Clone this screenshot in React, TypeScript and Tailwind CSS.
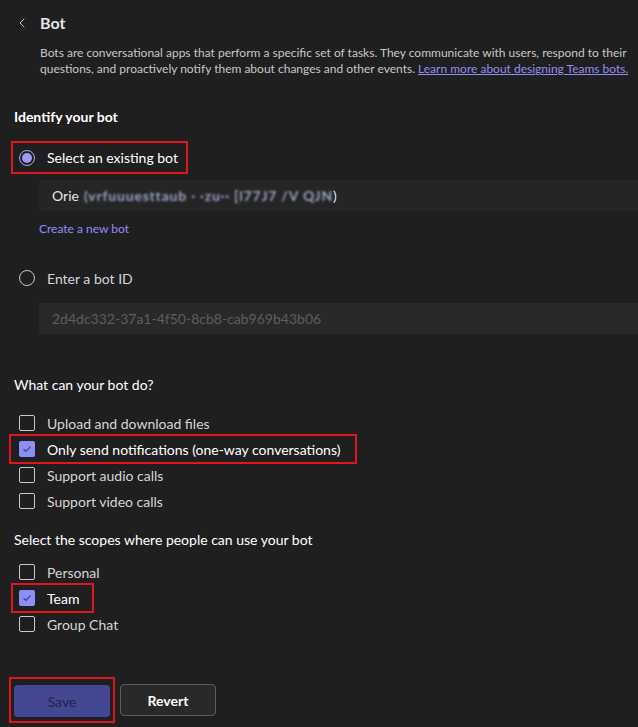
import { ChevronLeft } from 'lucide-react'

function Radio({ checked }: { checked?: boolean }) {
    return checked ? (
        <span className="w-[16px] h-[16px] rounded-full border border-[#a8a9f5] flex items-center justify-center shrink-0">
            <span className="w-[10px] h-[10px] rounded-full bg-[#9a9bf2]" />
        </span>
    ) : (
        <span className="w-[16px] h-[16px] rounded-full border border-[#c8c8c8] shrink-0" />
    )
}

function Check({ checked }: { checked?: boolean }) {
    return checked ? (
        <span className="w-[16px] h-[16px] rounded-[2px] bg-[#8e8ff5] flex items-center justify-center shrink-0">
            <svg width="10" height="8" viewBox="0 0 10 8" fill="none">
                <path d="M1.5 4.2L3.8 6.3L8.5 1.6" stroke="#3d3e80" strokeWidth="1.2" />
            </svg>
        </span>
    ) : (
        <span className="w-[16px] h-[16px] rounded-[2px] border border-[#c8c8c8] shrink-0" />
    )
}

function CheckRow({ label, checked }: { label: string; checked?: boolean }) {
    return (
        <div className="flex items-center h-[26px] gap-[12px] pl-[19px] whitespace-nowrap">
            <Check checked={checked} />
            <span className={`text-[14px] ${checked ? 'text-white' : 'text-[#d6d6d6]'}`}>{label}</span>
        </div>
    )
}

export default function App() {
    return (
        <div className="w-[638px] h-[727px] overflow-hidden bg-[#1f1f1f] text-[#d6d6d6] font-['Lato',sans-serif]">
            {/* Header */}
            <div className="flex items-center pt-[12px] pl-[14px] h-[34px]">
                <ChevronLeft className="w-[16px] h-[16px] text-[#c8c8c8]" strokeWidth={1.5} />
                <h1 className="ml-[10px] text-[16px] font-bold text-[#e6e6e6] leading-[22px]">Bot</h1>
            </div>
            <p className="pl-[40px] mt-[11px] text-[12px] leading-[16px] text-[#c8c8c8] whitespace-nowrap">
                Bots are conversational apps that perform a specific set of tasks. They communicate with users, respond to their
                <br />
                questions, and proactively notify them about changes and other events.{' '}
                <span className="text-[#8f90f5] underline">Learn more about designing Teams bots.</span>
            </p>

            {/* Identify */}
            <h2 className="pl-[14px] mt-[31px] text-[14px] font-bold text-white leading-[18px]">Identify your bot</h2>
            <div className="mt-[15px] pl-[11px]">
                <div className="inline-flex items-center gap-[12px] border-2 border-[#e0161c] h-[33px] pl-[6px] pr-[8px]">
                    <Radio checked />
                    <span className="text-[14px] text-white">Select an existing bot</span>
                </div>
            </div>
            <div className="ml-[39px] mt-[6px] h-[31px] bg-[#252525] flex items-center pl-[13px] text-[14px] text-[#e6e6e6] whitespace-nowrap">
                Orie
                <span className="ml-[5px] blur-[1px] text-[#9aa4c8] font-bold tracking-[0.8px]">(vrfuuuesttaub · ·zu·· [l77J7 /V QJN</span>
                <span className="text-[#e6e6e6]">)</span>
            </div>
            <div className="pl-[39px] mt-[10px] text-[12px] text-[#8f90f5] leading-[16px]">Create a new bot</div>

            <div className="flex items-center gap-[12px] pl-[19px] mt-[31px] h-[20px]">
                <Radio />
                <span className="text-[14px] text-[#d6d6d6]">Enter a bot ID</span>
            </div>
            <div className="ml-[39px] mt-[15px] h-[31px] bg-[#292929] rounded-l-[3px] flex items-center pl-[13px] text-[14px] text-[#5e5e5e]">
                2d4dc332-37a1-4f50-8cb8-cab969b43b06
            </div>

            {/* Capabilities */}
            <h3 className="pl-[14px] mt-[42px] text-[14px] text-white leading-[18px]">What can your bot do?</h3>
            <div className="mt-[16px] flex flex-col">
                <CheckRow label="Upload and download files" />
                <div className="ml-[9px] w-[348px] border-2 border-[#e0161c] -my-[2px]">
                    <div className="-ml-[11px]">
                        <CheckRow label="Only send notifications (one-way conversations)" checked />
                    </div>
                </div>
                <CheckRow label="Support audio calls" />
                <CheckRow label="Support video calls" />
            </div>

            {/* Scopes */}
            <h3 className="pl-[14px] mt-[17px] text-[14px] text-white leading-[18px]">Select the scopes where people can use your bot</h3>
            <div className="mt-[10px] flex flex-col">
                <CheckRow label="Personal" />
                <div className="ml-[11px] w-[83px] border-2 border-[#e0161c] -my-[2px]">
                    <div className="-ml-[13px]">
                        <CheckRow label="Team" checked />
                    </div>
                </div>
                <CheckRow label="Group Chat" />
            </div>

            {/* Actions */}
            <div className="flex items-center gap-[5px] mt-[40px] pl-[9px]">
                <div className="border-2 border-[#e0161c] px-[3px] pt-[6px] pb-[4px]">
                    <button className="w-[96px] h-[32px] rounded-[4px] bg-[#444791] text-[14px] text-[#22234a]">Save</button>
                </div>
                <button className="w-[96px] h-[32px] rounded-[4px] border border-[#5c5c5c] bg-[#292929] text-[14px] text-white font-bold">
                    Revert
                </button>
            </div>
        </div>
    )
}
